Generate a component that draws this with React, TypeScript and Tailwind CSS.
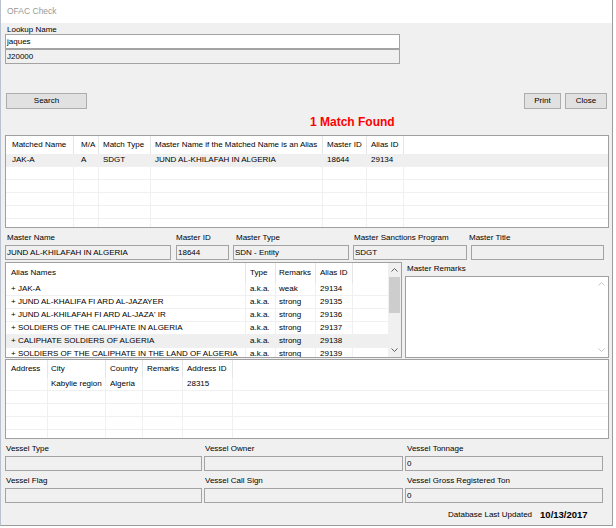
import React from "react";

type Col = { cls: string; label: string };

function Chevron({ up, color }: { up: boolean; color: string }) {
  return (
    <svg width="7" height="4" viewBox="0 0 7 4">
      <polyline
        points={up ? "0.5,3.5 3.5,0.5 6.5,3.5" : "0.5,0.5 3.5,3.5 6.5,0.5"}
        fill="none"
        stroke={color}
        strokeWidth="1"
      />
    </svg>
  );
}

function Table({
  cols,
  rows,
  nRows,
  headerCls,
  selected,
}: {
  cols: Col[];
  rows: string[][];
  nRows: number;
  headerCls: string;
  selected?: number;
}) {
  const all: string[][] = [];
  for (let i = 0; i < nRows; i++) all.push(rows[i] || cols.map(() => ""));
  return (
    <div className="flex flex-col w-full h-full overflow-hidden">
      <div className={`${headerCls} flex shrink-0 bg-white`}>
        {cols.map((c, i) => (
          <div
            key={i}
            className={`${c.cls} shrink-0 h-full flex items-center border-r border-[#e5e5e5] whitespace-nowrap overflow-hidden`}
          >
            {c.label}
          </div>
        ))}
        <div className="flex-1" />
      </div>
      {all.map((r, ri) => (
        <div
          key={ri}
          className={`h-[13px] shrink-0 flex border-b border-[#f0f0f0] ${
            ri === selected ? "bg-[#efefef]" : "bg-white"
          }`}
        >
          {cols.map((c, i) => (
            <div
              key={i}
              className={`${c.cls} shrink-0 h-full flex items-center border-r border-[#f0f0f0] whitespace-nowrap overflow-hidden`}
            >
              {r[i]}
            </div>
          ))}
          <div className="flex-1" />
        </div>
      ))}
    </div>
  );
}

function Box({ cls, text, white }: { cls: string; text?: string; white?: boolean }) {
  return (
    <div
      className={`${cls} h-[15px] shrink-0 border border-[#a3a3a3] ${
        white ? "bg-white" : "bg-[#f0f0f0]"
      } flex items-center pl-[1px] leading-none whitespace-nowrap overflow-hidden`}
    >
      {text}
    </div>
  );
}

function Btn({ cls, label }: { cls: string; label: string }) {
  return (
    <div
      className={`${cls} h-[16px] border border-[#adadad] bg-[#e1e1e1] flex items-center justify-center leading-none`}
    >
      {label}
    </div>
  );
}

export default function App() {
  const matchedCols: Col[] = [
    { cls: "w-[68px] pl-[6px]", label: "Matched Name" },
    { cls: "w-[25px] pl-[7px]", label: "M/A" },
    { cls: "w-[52px] pl-[4px]", label: "Match Type" },
    { cls: "w-[172px] pl-[4px]", label: "Master Name if the Matched Name is an Alias" },
    { cls: "w-[44px] pl-[4px]", label: "Master ID" },
    { cls: "w-[37px] pl-[4px]", label: "Alias ID" },
  ];
  const aliasCols: Col[] = [
    { cls: "w-[240px] pl-[5px]", label: "Alias Names" },
    { cls: "w-[30px] pl-[4px]", label: "Type" },
    { cls: "w-[40px] pl-[3px]", label: "Remarks" },
    { cls: "w-[37px] pl-[4px]", label: "Alias ID" },
  ];
  const addrCols: Col[] = [
    { cls: "w-[42px] pl-[5px]", label: "Address" },
    { cls: "w-[58px] pl-[3px]", label: "City" },
    { cls: "w-[37px] pl-[4px]", label: "Country" },
    { cls: "w-[40px] pl-[4px]", label: "Remarks" },
    { cls: "w-[50px] pl-[4px]", label: "Address ID" },
  ];
  const aliasRows = [
    ["+ JAK-A", "a.k.a.", "weak", "29134"],
    ["+ JUND AL-KHALIFA FI ARD AL-JAZAYER", "a.k.a.", "strong", "29135"],
    ["+ JUND AL-KHILAFAH FI ARD AL-JAZA' IR", "a.k.a.", "strong", "29136"],
    ["+ SOLDIERS OF THE CALIPHATE IN ALGERIA", "a.k.a.", "strong", "29137"],
    ["+ CALIPHATE SOLDIERS OF ALGERIA", "a.k.a.", "strong", "29138"],
    ["+ SOLDIERS OF THE CALIPHATE IN THE LAND OF ALGERIA", "a.k.a.", "strong", "29139"],
  ];

  return (
    <div className="w-[616px] h-[528px] bg-white font-['Liberation_Sans',Arial,sans-serif] text-[8px] text-black">
      <div className="w-[613px] h-[526px] border-l border-r border-b border-l-[#b9c3cf] border-r-[#9c9c9c] border-b-[#9c9c9c] flex flex-col">
        <div className="h-[23px] shrink-0 bg-white flex items-center pl-[6px] text-[8.5px] text-[#999999]">
          OFAC Check
        </div>
        <div className="flex-1 bg-[#f0f0f0] pl-[4px] pr-[2px] flex flex-col">
          <div className="h-[11px] flex items-end leading-none pl-[2px]">Lookup Name</div>
          <Box cls="w-[395px]" text="jaques" white />
          <Box cls="w-[395px]" text="J20000" />
          <div className="mt-[29px] h-[16px] flex">
            <Btn cls="ml-[1px] w-[81px]" label="Search" />
            <div className="flex-1" />
            <Btn cls="w-[37px]" label="Print" />
            <Btn cls="ml-[4px] mr-[3px] w-[42px]" label="Close" />
          </div>
          <div className="mt-[5px] h-[15px] pl-[305px] flex items-center text-[12px] font-bold text-[#ff0000] leading-none">
            1 Match Found
          </div>
          <div className="mt-[6px] h-[93px] w-[604px] border border-[#a0a0a0] bg-white">
            <Table
              cols={matchedCols}
              rows={[["JAK-A", "A", "SDGT", "JUND AL-KHILAFAH IN ALGERIA", "18644", "29134"]]}
              nRows={6}
              headerCls="h-[18px]"
              selected={0}
            />
          </div>
          <div className="h-[17px] flex items-end pb-[3px] leading-none">
            <div className="w-[170px] pl-[2px]">Master Name</div>
            <div className="w-[61px] pl-[1px]">Master ID</div>
            <div className="w-[117px]">Master Type</div>
            <div className="w-[116px] pl-[1px]">Master Sanctions Program</div>
            <div>Master Title</div>
          </div>
          <div className="h-[15px] flex">
            <Box cls="w-[166px]" text="JUND AL-KHILAFAH IN ALGERIA" />
            <Box cls="ml-[5px] w-[53px]" text="18644" />
            <Box cls="ml-[4px] w-[116px]" text="SDN - Entity" />
            <Box cls="ml-[4px] w-[114px]" text="SDGT" />
            <Box cls="ml-[4px] w-[133px]" />
          </div>
          <div className="mt-[2px] h-[96px] flex">
            <div className="w-[397px] h-full border border-[#a0a0a0] bg-white flex">
              <div className="flex-1 h-full overflow-hidden">
                <Table cols={aliasCols} rows={aliasRows} nRows={6} headerCls="h-[20px]" selected={4} />
              </div>
              <div className="w-[13px] h-full bg-[#f0f0f0] flex flex-col items-center">
                <div className="h-[14px] flex items-center justify-center">
                  <Chevron up color="#606060" />
                </div>
                <div className="w-[11px] h-[36px] bg-[#cdcdcd]" />
                <div className="flex-1" />
                <div className="h-[14px] flex items-center justify-center">
                  <Chevron up={false} color="#606060" />
                </div>
              </div>
            </div>
            <div className="ml-[3px] w-[204px] flex flex-col">
              <div className="h-[14px] flex items-center pl-[2px] leading-none">Master Remarks</div>
              <div className="h-[82px] border border-[#a0a0a0] bg-white flex justify-end">
                <div className="w-[13px] h-full flex flex-col items-center justify-between py-[5px]">
                  <Chevron up color="#c8c8c8" />
                  <Chevron up={false} color="#c8c8c8" />
                </div>
              </div>
            </div>
          </div>
          <div className="mt-[1px] h-[80px] w-[604px] border border-[#a0a0a0] bg-white">
            <Table
              cols={addrCols}
              rows={[["", "Kabylie region", "Algeria", "", "28315"]]}
              nRows={5}
              headerCls="h-[18px]"
            />
          </div>
          <div className="h-[17px] flex items-end pb-[3px] leading-none">
            <div className="w-[200px] pl-[1px]">Vessel Type</div>
            <div className="w-[201px]">Vessel Owner</div>
            <div className="pl-[1px]">Vessel Tonnage</div>
          </div>
          <div className="h-[15px] flex">
            <Box cls="w-[197px]" />
            <Box cls="ml-[2px] w-[199px]" />
            <Box cls="ml-[2px] w-[198px]" text="0" />
          </div>
          <div className="h-[17px] flex items-end pb-[3px] leading-none">
            <div className="w-[200px] pl-[1px]">Vessel Flag</div>
            <div className="w-[201px]">Vessel Call Sign</div>
            <div className="pl-[1px]">Vessel Gross Registered Ton</div>
          </div>
          <div className="h-[15px] flex">
            <Box cls="w-[197px]" />
            <Box cls="ml-[2px] w-[199px]" />
            <Box cls="ml-[2px] w-[198px]" text="0" />
          </div>
          <div className="mt-[7px] h-[10px] flex items-center leading-none pl-[443px]">
            <span>Database Last Updated</span>
            <span className="ml-[8px] font-bold text-[9.5px]">10/13/2017</span>
          </div>
        </div>
      </div>
    </div>
  );
}
